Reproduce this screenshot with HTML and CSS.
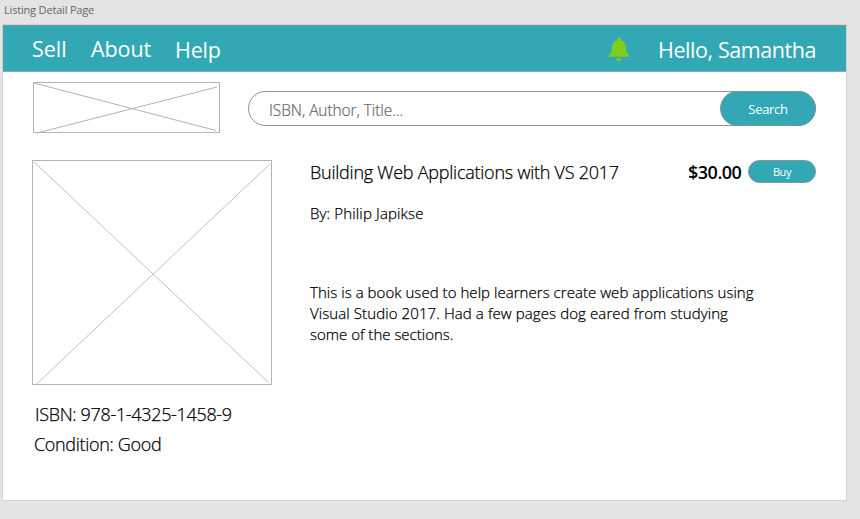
FILE: index.html
```
<!DOCTYPE html>
<html lang="en">
<head>
<meta charset="utf-8">
<title>Listing Detail Page</title>
<link rel="stylesheet" href="styles.css">
</head>
<body>
<div class="board-label"><span class="t-label">Listing Detail Page</span></div>
<div class="board">
  <header class="topbar">
    <nav class="nav">
      <a class="t-sell">Sell</a>
      <a class="t-about">About</a>
      <a class="t-help">Help</a>
    </nav>
    <div class="bell">
      <svg width="22" height="25" viewBox="0 0 22 25" fill="#80cc1e"><path d="M11 .5c1.200 0 1.900.8 1.900 2v.8c3.500.9 5 3.700 5.200 7.200.2 4.500.8 6 3.100 8.100.5.5.2 1.200-.5 1.200H1.300c-.7 0-1-.7-.5-1.200 2.300-2.100 2.900-3.600 3.100-8.100.2-3.500 1.700-6.300 5.200-7.200v-.8c0-1.200.7-2 1.900-2z"/><path d="M8.200 21.200h5.600c-.3 1.900-1.300 3-2.800 3s-2.500-1.100-2.800-3z"/></svg>
    </div>
    <div class="greeting"><span class="t-hello">Hello, Samantha</span></div>
  </header>
  <div class="search-row">
    <svg class="logo" width="188" height="52" fill="none" stroke="#b4b4b4"><rect x=".5" y=".5" width="186" height="50"/><path d="M1 1L183 48.500M4 51L184 5"/></svg>
    <div class="search">
      <span class="t-placeholder">ISBN, Author, Title...</span>
      <button class="btn search-btn"><span class="t-search">Search</span></button>
    </div>
  </div>
  <main class="listing">
    <section class="left">
      <svg class="cover" width="241" height="226" fill="none" stroke="#b4b4b4"><rect x=".5" y=".5" width="239" height="224"/><path stroke="#c0c0c0" d="M2 2L237 223M4 224.500L238 4"/></svg>
      <p class="fact isbn"><span class="t-isbn">ISBN: 978-1-4325-1458-9</span></p>
      <p class="fact"><span class="t-cond">Condition: Good</span></p>
    </section>
    <section class="right">
      <div class="title-row">
        <h1><span class="t-title">Building Web Applications with VS 2017</span></h1>
        <strong class="price"><span class="t-price">$30.00</span></strong>
        <button class="btn buy-btn"><span class="t-buy">Buy</span></button>
      </div>
      <p class="author"><span class="t-author">By: Philip Japikse</span></p>
      <p class="desc"><span class="t-d1">This is a book used to help learners create web applications using</span><br><span class="t-d2">Visual Studio 2017. Had a few pages dog eared from studying</span><br><span class="t-d3">some of the sections.</span></p>
    </section>
  </main>
</div>
</body>
</html>
```
FILE: styles.css
```
* { box-sizing: border-box; }
body { margin: 0; height: 519px; overflow: hidden; background: #e4e4e4; font-family: "Open Sans", sans-serif; font-weight: 300; color: #000; white-space: nowrap; }
h1, p { margin: 0; font-weight: 300; -webkit-text-stroke: .25px #000; }
.board-label { height: 24px; padding-left: 4px; font-size: 11px; line-height: 20px; font-weight: 400; color: #666; letter-spacing: -.18px; }
.board { width: 845px; height: 477px; margin-left: 2px; background: #fff; border: 1px solid #d2d2d2; }
.topbar { display: flex; height: 47px; background: #32a8b4; border-top: 1px solid #82969a; border-bottom: 1px solid #88aab0; color: #fff; font-size: 21.500px; line-height: 46px; font-weight: 400; padding-left: 29px; }
.nav { display: flex; width: 572px; }
.t-sell { width: 59px; }
.t-about { width: 84px; letter-spacing: -.1px; }
.t-help { padding-top: 1px; letter-spacing: -.2px; }
.bell { width: 54px; padding-top: 11px; }
.bell svg { display: block; margin-left: 4px; }
.greeting { padding-top: 1px; letter-spacing: -.42px; }
.search-row { display: flex; padding: 10px 0 0 30px; height: 88px; }
.search { display: flex; justify-content: space-between; width: 568px; height: 35px; margin: 9px 0 0 27px; border: 1px solid #929292; border-radius: 18px; padding-left: 20px; font-size: 15.500px; line-height: 36px; color: #666; letter-spacing: -.08px; -webkit-text-stroke: .2px #666; }
.btn { display: block; border: 1px solid #7e979b; background: #32a8b4; color: #fff; font-family: inherit; font-weight: 400; padding: 0; -webkit-text-stroke: 0; }
.search-btn { width: 96px; height: 35px; margin: -1px; border-radius: 18px; font-size: 13px; line-height: 34px; letter-spacing: -.3px; }
.listing { display: flex; padding-left: 29px; }
.left { width: 278px; }
.cover { display: block; }
.fact { height: 30px; padding-left: 2px; font-size: 18px; line-height: 31px; letter-spacing: -.33px; }
.isbn { margin-top: 13px; padding-left: 3px; }
.title-row { display: flex; font-size: 18px; line-height: 25px; height: 24px; }
.title-row h1 { width: 378px; font-size: 18px; letter-spacing: -.24px; }
.price { width: 60px; font-weight: 600; letter-spacing: -.5px; }
.buy-btn { width: 68px; height: 23px; border-radius: 12px; font-size: 11px; line-height: 21px; letter-spacing: -.4px; }
.author { margin-top: 19px; font-size: 15px; line-height: 20px; letter-spacing: .15px; }
.desc { margin-top: 59px; font-size: 15px; line-height: 21px; }
.t-d1 { letter-spacing: .045px; }
.t-d2 { letter-spacing: .1px; }
```
